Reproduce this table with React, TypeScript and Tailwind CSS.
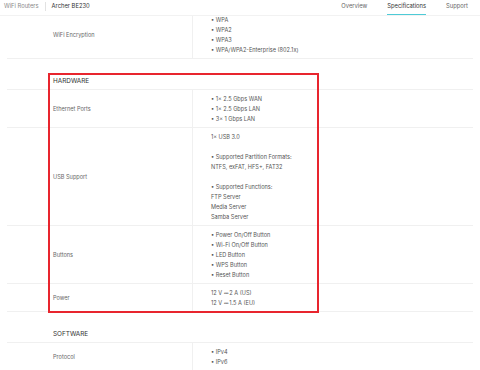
import React from "react"

type SpecRow = { label: string; lines: string[] }

const font = { fontFamily: "Inter, 'Liberation Sans', sans-serif" }

const wifiRow: SpecRow = {
  label: "WiFi Encryption",
  lines: ["• WPA", "• WPA2", "• WPA3", "• WPA/WPA2-Enterprise (802.1x)"],
}

const hardwareRows: SpecRow[] = [
  {
    label: "Ethernet Ports",
    lines: ["• 1× 2.5 Gbps WAN", "• 1× 2.5 Gbps LAN", "• 3× 1 Gbps LAN"],
  },
  {
    label: "USB Support",
    lines: [
      "1× USB 3.0",
      "",
      "• Supported Partition Formats:",
      "NTFS, exFAT, HFS+, FAT32",
      "",
      "• Supported Functions:",
      "FTP Server",
      "Media Server",
      "Samba Server",
    ],
  },
  {
    label: "Buttons",
    lines: [
      "• Power On/Off Button",
      "• Wi-Fi On/Off Button",
      "• LED Button",
      "• WPS Button",
      "• Reset Button",
    ],
  },
  {
    label: "Power",
    lines: ["12 V ⎓ 2 A (US)", "12 V ⎓ 1.5 A (EU)"],
  },
]

const softwareRows: SpecRow[] = [
  { label: "Protocol", lines: ["• IPv4", "• IPv6"] },
]

function Row({ label, lines }: SpecRow) {
  return (
    <div className="flex border-b border-[#f0f0f0]">
      <div className="w-[185px] shrink-0 flex items-center pl-[46px] text-[5.6px] leading-[10px] text-[#666]">
        {label}
      </div>
      <div className="flex-1 border-l border-[#f0f0f0] pl-[18px] pt-1 pb-[3px] text-[5.6px] leading-[10px] text-[#555]">
        {lines.map((l, i) => (
          <div key={i} className="h-[10px] whitespace-nowrap">
            {l}
          </div>
        ))}
      </div>
    </div>
  )
}

function Heading({ title }: { title: string }) {
  return (
    <div className="border-b border-[#f0f0f0] pt-[17px] pb-[3px] pl-[46px] text-[6.4px] leading-[10px] text-[#333]">
      {title}
    </div>
  )
}

export default function App() {
  return (
    <div className="w-[480px] h-[370px] overflow-hidden bg-white flex flex-col" style={font}>
      <header className="relative z-10 h-[16px] shrink-0 bg-white border-b border-[#f2f2f2] flex items-start justify-between pl-[4px] pr-[12px]">
        <div className="flex items-center pt-px text-[5.8px] leading-[10px]">
          <span className="text-[#888]">WiFi Routers</span>
          <span className="mx-[6px] h-[9px] w-px bg-[#e2e2e2]" />
          <span className="text-[#333]">Archer BE230</span>
        </div>
        <nav className="flex gap-5 text-[5.8px] leading-[10px]">
          <span className="h-[15px] pt-px text-[#666]">Overview</span>
          <span className="h-[15px] pt-px text-[#333] border-b border-[#4ecbd7]">Specifications</span>
          <span className="h-[15px] pt-px text-[#666]">Support</span>
        </nav>
      </header>

      <main className="-mt-[5px] mx-[7px]">
        <Row {...wifiRow} />

        <section className="relative">
          <Heading title="HARDWARE" />
          {hardwareRows.map((r) => (
            <Row key={r.label} {...r} />
          ))}
          {/* highlight annotation */}
          <div className="absolute left-[41px] top-[14px] w-[271px] -bottom-px border-2 border-[#e8252e] pointer-events-none" />
        </section>

        <section>
          <Heading title="SOFTWARE" />
          {softwareRows.map((r) => (
            <Row key={r.label} {...r} />
          ))}
        </section>
      </main>
    </div>
  )
}
